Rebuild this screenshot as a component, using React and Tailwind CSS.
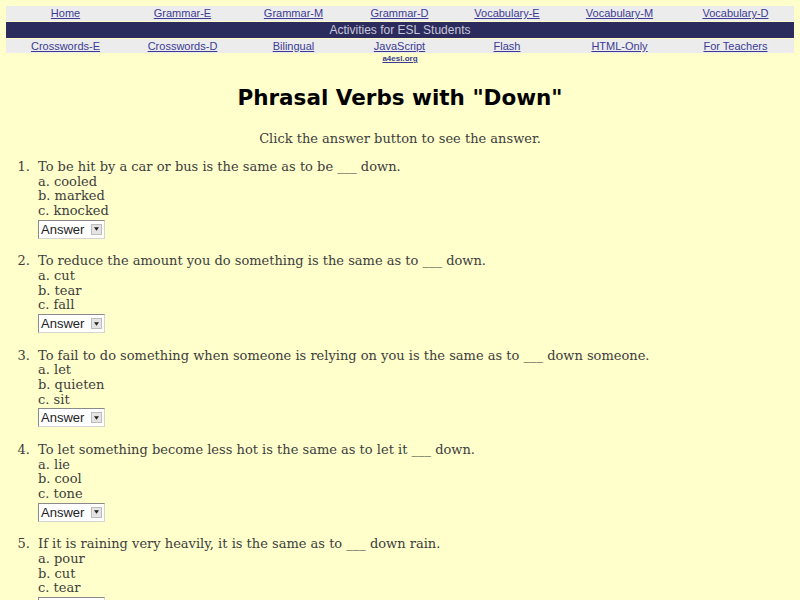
import React from "react";

const row1 = ["Home", "Grammar-E", "Grammar-M", "Grammar-D", "Vocabulary-E", "Vocabulary-M", "Vocabulary-D"];
const row3 = ["Crosswords-E", "Crosswords-D", "Bilingual", "JavaScript", "Flash", "HTML-Only", "For Teachers"];

const questions = [
  { q: "To be hit by a car or bus is the same as to be ___ down.", a: ["cooled", "marked", "knocked"] },
  { q: "To reduce the amount you do something is the same as to ___ down.", a: ["cut", "tear", "fall"] },
  { q: "To fail to do something when someone is relying on you is the same as to ___ down someone.", a: ["let", "quieten", "sit"] },
  { q: "To let something become less hot is the same as to let it ___ down.", a: ["lie", "cool", "tone"] },
  { q: "If it is raining very heavily, it is the same as to ___ down rain.", a: ["pour", "cut", "tear"] },
];

function NavRow({ items, h, lead }) {
  return (
    <div className={`grid grid-cols-[119px_115px_107px_105px_110px_115px_117px] bg-[#ececec] ${h}`}>
      {items.map((t) => (
        <div key={t} className={`text-center ${lead}`}>
          <a href="#" className="text-[11px] text-[#3b3b94] underline" style={{ fontFamily: '"Liberation Sans", Arial, sans-serif' }}>
            {t}
          </a>
        </div>
      ))}
    </div>
  );
}

function AnswerSelect() {
  return (
    <div className="flex items-stretch w-[67px] h-[19px] border border-[#8a8a8a] border-r-[#d4d4d4] border-b-[#d4d4d4] bg-white">
      <div className="flex-1 pl-[2px] text-[13px] leading-[17px] text-[#222]" style={{ fontFamily: '"Liberation Sans", Arial, sans-serif' }}>
        Answer
      </div>
      <div className="w-[11px] my-[3px] mr-[2px] bg-[#e4e4e4] border border-[#bdbdbd] flex items-center justify-center">
        <svg width="5" height="4" viewBox="0 0 6 4"><path d="M0 0h6L3 4z" fill="#222" /></svg>
      </div>
    </div>
  );
}

export default function App() {
  const serif = { fontFamily: '"DejaVu Serif", serif' };
  return (
    <div className="min-h-[600px] w-[800px] bg-[#ffffcc] pt-[6px]">
      <div className="mx-[6px] flex flex-col gap-[1px]">
        <NavRow items={row1} h="h-[15px]" lead="leading-[11px]" />
        <div className="bg-[#2b2b5e] h-[16px] flex items-center justify-center">
          <span className="text-[12px] text-[#c8c8d8]" style={{ fontFamily: '"Liberation Sans", Arial, sans-serif' }}>
            Activities for ESL Students
          </span>
        </div>
        <NavRow items={row3} h="h-[14px]" lead="leading-[10px]" />
      </div>
      <div className="text-center leading-[8px] -mt-[2px]">
        <a href="#" className="text-[8px] font-bold text-[#3b3b94] underline" style={{ fontFamily: '"Liberation Sans", Arial, sans-serif' }}>
          a4esl.org
        </a>
      </div>
      <h1 className="text-center text-[21.5px] font-bold text-black mt-[21px] leading-[28px]" style={{ fontFamily: '"DejaVu Sans", sans-serif' }}>
        Phrasal Verbs with "Down"
      </h1>
      <p className="text-center text-[13px] text-[#3d3d3d] mt-[19px] leading-[15px]" style={serif}>
        Click the answer button to see the answer.
      </p>
      <ol className="mt-[14px] text-[13px] leading-[14.7px] text-[#3d3d3d]" style={serif}>
        {questions.map((item, i) => (
          <li key={i} className="flex mb-[15.5px]">
            <span className="w-[38px] text-right pr-[8px] shrink-0">{i + 1}.</span>
            <div className="flex flex-col">
              <span>{item.q}</span>
              <span>a. {item.a[0]}</span>
              <span>b. {item.a[1]}</span>
              <span>c. {item.a[2]}</span>
              <div className="mt-[1px]">
                <AnswerSelect />
              </div>
            </div>
          </li>
        ))}
      </ol>
    </div>
  );
}
